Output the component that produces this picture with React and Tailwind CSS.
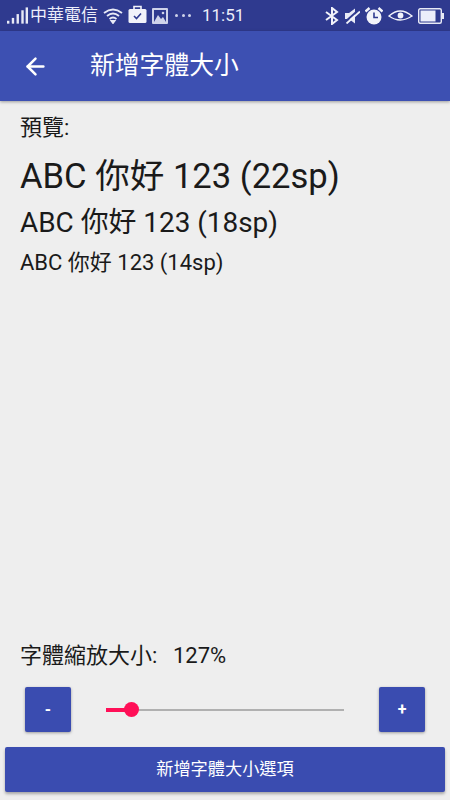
import React from "react";
import { ArrowLeft } from "lucide-react";

const font = "font-['Roboto','Noto_Sans_CJK_TC',sans-serif]";

const SignalIcon = () => (
  <svg width="21" height="20" viewBox="0 0 22 20" fill="#e8eaf6">
    <rect x="0" y="15" width="2.5" height="3" />
    <rect x="5" y="12" width="2.5" height="6" />
    <rect x="10" y="8" width="2.5" height="10" />
    <rect x="15" y="4" width="2.5" height="14" />
    <rect x="19.5" y="1" width="2.5" height="17" />
  </svg>
);

const WifiIcon = () => (
  <svg width="20" height="16" viewBox="0 0 20 16" fill="none" stroke="#e8eaf6" strokeWidth="1.8">
    <path d="M1 5 Q10 -2 19 5" />
    <path d="M4 8 Q10 3 16 8" />
    <path d="M6.5 11 Q10 8 13.5 11" />
    <path d="M8.5 13 L10 15 L11.5 13 Z" fill="#e8eaf6" />
  </svg>
);

const BriefcaseIcon = () => (
  <svg width="19" height="19" viewBox="0 0 19 19">
    <path d="M6 4 V1.5 H13 V4" fill="none" stroke="#f2f3fa" strokeWidth="1.6" />
    <rect x="0.5" y="4" width="18" height="14" rx="1.5" fill="#f2f3fa" />
    <path d="M6 11 L8.5 13.5 L13 8.5" fill="none" stroke="#2f3a8f" strokeWidth="1.6" />
  </svg>
);

const ImageIcon = () => (
  <svg width="16" height="16" viewBox="0 0 16 16">
    <rect x="0" y="0" width="16" height="16" rx="1" fill="#cfd3ea" />
    <rect x="2" y="2" width="12" height="12" fill="#2f3a8f" />
    <path d="M2 14 L6 7 L9 11 L11 9 L14 14 Z" fill="#cfd3ea" />
    <circle cx="11" cy="5" r="1.3" fill="#cfd3ea" />
  </svg>
);

const BluetoothIcon = () => (
  <svg width="14" height="18" viewBox="0 0 14 18" fill="none" stroke="#f2f3fa" strokeWidth="2">
    <path d="M1 5 L12 13 L7 17 V1 L12 5 L1 13" />
  </svg>
);

const MutedIcon = () => (
  <svg width="16" height="16" viewBox="0 0 16 16">
    <path d="M1 5 H5 L11 0.5 V15.5 L5 11 H1 Z" fill="#e8eaf6" />
    <path d="M1 14 L14.5 2" stroke="#2f3a8f" strokeWidth="2" />
    <path d="M2.5 15.5 L16 3.5" stroke="#f2f3fa" strokeWidth="1.8" />
  </svg>
);

const AlarmIcon = () => (
  <svg width="18" height="18" viewBox="0 0 18 18">
    <circle cx="9" cy="10" r="7.5" fill="#f2f3fa" />
    <path d="M9 5.5 V10.5 H13" fill="none" stroke="#2f3a8f" strokeWidth="1.6" />
    <path d="M0.5 4.5 L4.5 1 M17.5 4.5 L13.5 1" stroke="#f2f3fa" strokeWidth="2.4" />
  </svg>
);

const EyeIcon = () => (
  <svg width="25" height="14" viewBox="0 0 25 14" fill="none" stroke="#f2f3fa" strokeWidth="1.4">
    <path d="M1 7 Q12 -3 24 7 Q12 15 1 7 Z" />
    <circle cx="12.5" cy="6.5" r="2.2" fill="#f2f3fa" />
  </svg>
);

const BatteryIcon = () => (
  <svg width="26" height="16" viewBox="0 0 26 16">
    <rect x="0.7" y="0.7" width="22.6" height="14.6" rx="1.5" fill="#2f3a8f" stroke="#e8eaf6" strokeWidth="1.4" />
    <rect x="2.5" y="2.5" width="15" height="11" fill="#eceefa" />
    <rect x="24" y="5" width="2" height="6" fill="#e8eaf6" />
  </svg>
);

const StatusBar = () => (
  <div className="h-[31px] bg-[#2f3a8f] flex items-center text-[#eceefa] pl-[7px] pr-[6px] overflow-hidden">
    <SignalIcon />
    <span className="text-[17px] ml-[2px] leading-none whitespace-nowrap">中華電信</span>
    <span className="ml-[5px] flex"><WifiIcon /></span>
    <span className="ml-[5px] flex -mt-[3px]"><BriefcaseIcon /></span>
    <span className="ml-[5px] flex"><ImageIcon /></span>
    <span className="ml-[7px] w-[16px] flex justify-between">
      <i className="w-[3px] h-[3px] rounded-full bg-[#cfd3ea]" />
      <i className="w-[3px] h-[3px] rounded-full bg-[#cfd3ea]" />
      <i className="w-[3px] h-[3px] rounded-full bg-[#cfd3ea]" />
    </span>
    <span className="ml-[11px] text-[17px] leading-none">11:51</span>
    <div className="ml-auto flex items-center gap-[5px]">
      <BluetoothIcon />
      <MutedIcon />
      <AlarmIcon />
      <EyeIcon />
      <BatteryIcon />
    </div>
  </div>
);

const SquareButton = ({ label }) => (
  <button className="w-[46px] h-[45px] bg-[#3a4cb0] rounded-[2px] shadow-[0_1px_3px_rgba(0,0,0,0.35)] text-white text-[16px] font-bold flex items-center justify-center">
    {label}
  </button>
);

export default function App() {
  return (
    <div className={`${font} w-[450px] h-[800px] bg-[#eeeeee] flex flex-col overflow-hidden`}>
      <StatusBar />

      {/* Toolbar */}
      <div className="h-[70px] bg-[#3d50b2] shadow-[0_1px_3px_rgba(0,0,0,0.35)] flex items-center text-white z-10">
        <ArrowLeft className="ml-[22px] w-[27px] h-[27px]" strokeWidth={2.2} />
        <h1 className="ml-[41px] text-[24.8px] font-normal leading-none">新增字體大小</h1>
      </div>

      {/* Preview */}
      <div className="flex-1 px-[20px] pt-[13px] text-[#1a1a1a]">
        <p className="text-[22px] leading-[28px]">預覽:</p>
        <p className="text-[34.6px] leading-[44px] mt-[12px]">ABC 你好 123 (22sp)</p>
        <p className="text-[27.9px] leading-[36px] mt-[7px]">ABC 你好 123 (18sp)</p>
        <p className="text-[22px] leading-[28px] mt-[8px]">ABC 你好 123 (14sp)</p>
      </div>

      {/* Scale */}
      <div className="px-[20px] flex text-[22px] leading-[28px] text-[#1a1a1a]">
        <span className="w-[153px]">字體縮放大小:</span>
        <span>127%</span>
      </div>
      <div className="flex items-center pl-[25px] pr-[25px] mt-[17px]">
        <SquareButton label="-" />
        <div className="relative flex-1 mx-[35px] h-[20px] flex items-center">
          <div className="w-full h-[2px] bg-[#b0b0b0]" />
          <div className="absolute left-0 w-[25px] h-[4px] bg-[#ff0f57]" />
          <div className="absolute left-[18px] w-[15px] h-[15px] rounded-full bg-[#ff0f57]" />
        </div>
        <SquareButton label="+" />
      </div>

      <div className="px-[5px] pt-[15px] pb-[8px]">
        <button className="w-full h-[45px] bg-[#3a4cb0] rounded-[2px] shadow-[0_2px_3px_rgba(0,0,0,0.3)] text-white text-[17.2px] font-normal">
          新增字體大小選項
        </button>
      </div>
    </div>
  );
}
